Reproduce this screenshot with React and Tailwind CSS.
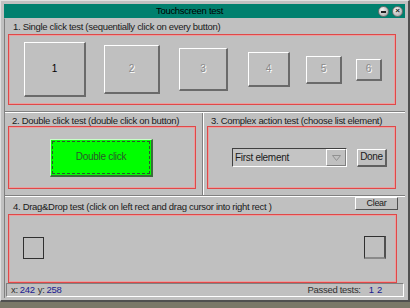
import React from 'react';

const font = "font-['Liberation_Sans','Helvetica',sans-serif]";

function BevelButton({ label, w, h, ml, dim }) {
  return (
    <div
      className={`flex items-center justify-center bg-[#c0c0c0] border-t border-l border-white border-b-2 border-r-2 border-b-[#6a6a6a] border-r-[#6a6a6a] text-[10px] ${dim ? 'text-[#8a8a8a] [text-shadow:1px_1px_0_#ffffff]' : 'text-black'}`}
      style={{ width: w, height: h, marginLeft: ml }}
    >
      {label}
    </div>
  );
}

function Groove({ vertical }) {
  return vertical ? (
    <div className="w-[2px] self-stretch border-l border-l-[#808080] border-r border-r-white" />
  ) : (
    <div className="h-[2px] w-full border-t border-t-[#808080] border-b border-b-white" />
  );
}

function RedBox({ className, children }) {
  return (
    <div className={`border border-[#e04848] shadow-[inset_0_0_0_1px_#e8a0a0] ${className}`}>
      {children}
    </div>
  );
}

export default function App() {
  const buttons = [
    { label: '1', w: 62, h: 55, ml: 15 },
    { label: '2', w: 56, h: 49, ml: 18, dim: true },
    { label: '3', w: 49, h: 43, ml: 19, dim: true },
    { label: '4', w: 42, h: 35, ml: 20, dim: true },
    { label: '5', w: 36, h: 28, ml: 16, dim: true },
    { label: '6', w: 26, h: 22, ml: 14, dim: true },
  ];

  return (
    <div className={`w-[410px] h-[308px] bg-[#7a7868] ${font} text-[9.5px] tracking-[-0.3px] leading-none text-[#1a1a1a]`}>
      <div className="w-[410px] h-[302px] bg-[#c0c0c0] border-t border-l border-[#e0e0e0] border-b-2 border-r-2 border-b-[#505050] border-r-[#505050] p-[3px] flex flex-col">
        {/* title bar */}
        <div className="h-[14px] bg-[#00806e] flex items-center pl-[1px] pr-[2px] shrink-0">
          <div className="flex-1 text-center text-[9.5px] text-black pr-[4px]">Touchscreen test</div>
          <div className="flex gap-[3px]">
            <div className="w-[11px] h-[11px] rounded-full bg-[radial-gradient(circle_at_35%_30%,#f4f4f4,#a0a0a0)] border border-[#707070] flex items-center justify-center">
              <div className="w-[5px] h-[2px] bg-[#202020] mt-[1px]" />
            </div>
            <div className="w-[11px] h-[11px] rounded-full bg-[radial-gradient(circle_at_35%_30%,#f4f4f4,#a0a0a0)] border border-[#707070] flex items-center justify-center text-[8px] font-bold text-[#202020]">
              ×
            </div>
          </div>
        </div>

        {/* client area */}
        <div className="flex-1 flex flex-col border-l border-l-[#808080] border-t border-t-[#c0c0c0]">
          {/* section 1 */}
          <div className="px-[3px] pt-[3px] h-[92px] shrink-0">
            <div className="pl-[5px] h-[10px]">1. Single click test (sequentially click on every button)</div>
            <RedBox className="mt-[2px] h-[71px] w-[388px] flex items-center">
              {buttons.map((b) => (
                <BevelButton key={b.label} {...b} />
              ))}
            </RedBox>
          </div>
          <Groove />

          {/* sections 2 and 3 */}
          <div className="flex h-[82px] shrink-0">
            <div className="w-[197px] px-[3px] pt-[3px]">
              <div className="pl-[4px] h-[10px]">2. Double click test (double click on button)</div>
              <RedBox className="h-[63px] w-[188px] flex items-center">
                <div className="ml-[41px] w-[103px] h-[38px] bg-[#00ff00] border-t border-l border-[#c8ffc8] border-b-2 border-r-2 border-b-[#3c6c3c] border-r-[#3c6c3c] p-[1px]">
                  <div className="w-full h-full border border-dashed border-[#305030] flex items-center justify-center text-[10px] text-[#2a5a2a]">
                    Double click
                  </div>
                </div>
              </RedBox>
            </div>
            <Groove vertical />
            <div className="flex-1 px-[3px] pt-[3px]">
              <div className="pl-[4px] h-[10px]">3. Complex action test (choose list element)</div>
              <RedBox className="h-[63px] w-[189px] flex items-center">
                <div className="ml-[24px] w-[115px] h-[19px] flex border-t border-l border-[#404040] border-b border-r border-b-white border-r-white">
                  <div className="flex-1 flex items-center pl-[2px] text-[10px] bg-[#c4c4c4]">First element</div>
                  <div className="w-[20px] h-full bg-[#c0c0c0] border-t border-l border-white border-b border-r border-b-[#808080] border-r-[#808080] flex items-center justify-center">
                    <svg width="9" height="6" viewBox="0 0 9 6">
                      <path d="M0.5 0.5 L8.5 0.5 L4.5 5.5 Z" fill="none" stroke="#909090" strokeWidth="1" />
                    </svg>
                  </div>
                </div>
                <div className="ml-[10px] w-[30px] h-[18px] bg-[#c0c0c0] border-t border-l border-white border-b-2 border-r-2 border-b-[#606060] border-r-[#606060] flex items-center justify-center text-[10px]">
                  Done
                </div>
              </RedBox>
            </div>
          </div>
          <Groove />

          {/* section 4 */}
          <div className="px-[3px] shrink-0">
            <div className="flex items-start h-[16px]">
              <div className="pl-[5px] pt-[5px] flex-1">4. Drag&amp;Drop test (click on left rect and drag cursor into right rect )</div>
              <div className="mr-[4px] w-[43px] h-[13px] bg-[#c0c0c0] border-t border-l border-white border-b border-r border-b-[#505050] border-r-[#505050] flex items-center justify-center text-[9px]">
                Clear
              </div>
            </div>
            <RedBox className="mt-[1px] h-[69px] w-[389px] flex items-center justify-between pl-[14px] pr-[10px]">
              <div className="w-[21px] h-[22px] border border-[#303030] -mt-[2px]" />
              <div className="w-[22px] h-[23px] border-t border-l border-[#303030] border-b-2 border-r-2 border-b-[#8a8a8a] border-r-[#505050] -mt-[2px]" />
            </RedBox>
          </div>

          {/* status bar */}
          <div className="mt-auto mb-[1px] mx-[1px] h-[14px] flex items-center border-t border-l border-[#808080] border-b border-r border-b-white border-r-white px-[4px]">
            <span className="text-[#303030]">x:</span>
            <span className="ml-[2px] text-[#1a1a90]">242</span>
            <span className="ml-[3px] text-[#303030]">y:</span>
            <span className="ml-[2px] text-[#1a1a90]">258</span>
            <span className="ml-auto text-[#303030]">Passed tests:</span>
            <span className="ml-[8px] mr-[17px] text-[#1a1a90] [word-spacing:1px]">1 2</span>
          </div>
        </div>
      </div>
    </div>
  );
}
